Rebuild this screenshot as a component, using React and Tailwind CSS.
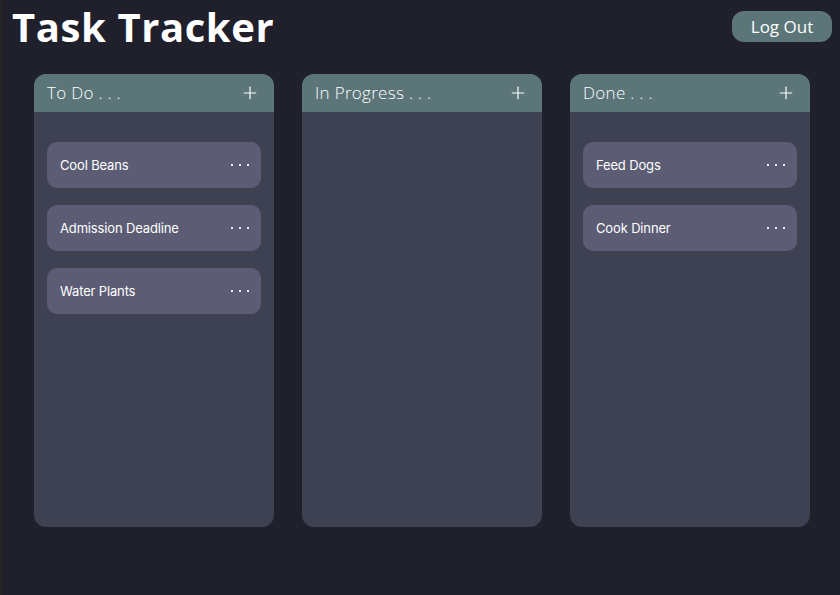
import { Plus } from 'lucide-react'

const columns = [
  { title: 'To Do . . .', tasks: ['Cool Beans', 'Admission Deadline', 'Water Plants'] },
  { title: 'In Progress . . .', tasks: [] },
  { title: 'Done . . .', tasks: ['Feed Dogs', 'Cook Dinner'] },
]

function TaskCard({ name }) {
  return (
    <div className="h-[46px] rounded-[10px] bg-[#5c5d74] flex items-center justify-between pl-[13px] pr-[12px]">
      <span className="text-[13px] text-white font-['Inter',sans-serif] tracking-[-0.15px] mt-[2px]">{name}</span>
      <span className="flex gap-[6px] items-center">
        <span className="w-[2px] h-[2px] bg-white/90" />
        <span className="w-[2px] h-[2px] bg-white/90" />
        <span className="w-[2px] h-[2px] bg-white/90" />
      </span>
    </div>
  )
}

function Column({ title, tasks }) {
  return (
    <div className="w-[240px] h-[453px] rounded-[12px] bg-[#3e4152] overflow-hidden flex flex-col">
      <div className="h-[38px] bg-[#5b7578] flex items-center justify-between pl-[13px] pr-[14px]">
        <span className="text-[17px] font-light text-white tracking-[0.3px]">{title}</span>
        <Plus size={20} strokeWidth={1.4} className="text-white" />
      </div>
      <div className="flex flex-col gap-[17px] px-[13px] pt-[30px]">
        {tasks.map(t => <TaskCard key={t} name={t} />)}
      </div>
    </div>
  )
}

export default function App() {
  return (
    <div className="w-[840px] h-[595px] bg-[#20202c] border-l-2 border-[#262628] font-['Open_Sans',sans-serif] overflow-hidden">
      <header className="flex items-start justify-between pl-[10px] pr-[8px] pt-[1px]">
        <h1 className="text-[40px] font-bold text-white leading-[52px] tracking-[0.6px]">Task Tracker</h1>
        <button className="mt-[10px] w-[100px] h-[31px] rounded-[12px] bg-[#5b7578] text-white text-[17px] font-normal">
          Log Out
        </button>
      </header>
      <main className="flex gap-[28px] pl-[32px] pt-[21px]">
        {columns.map(c => <Column key={c.title} title={c.title} tasks={c.tasks} />)}
      </main>
    </div>
  )
}
